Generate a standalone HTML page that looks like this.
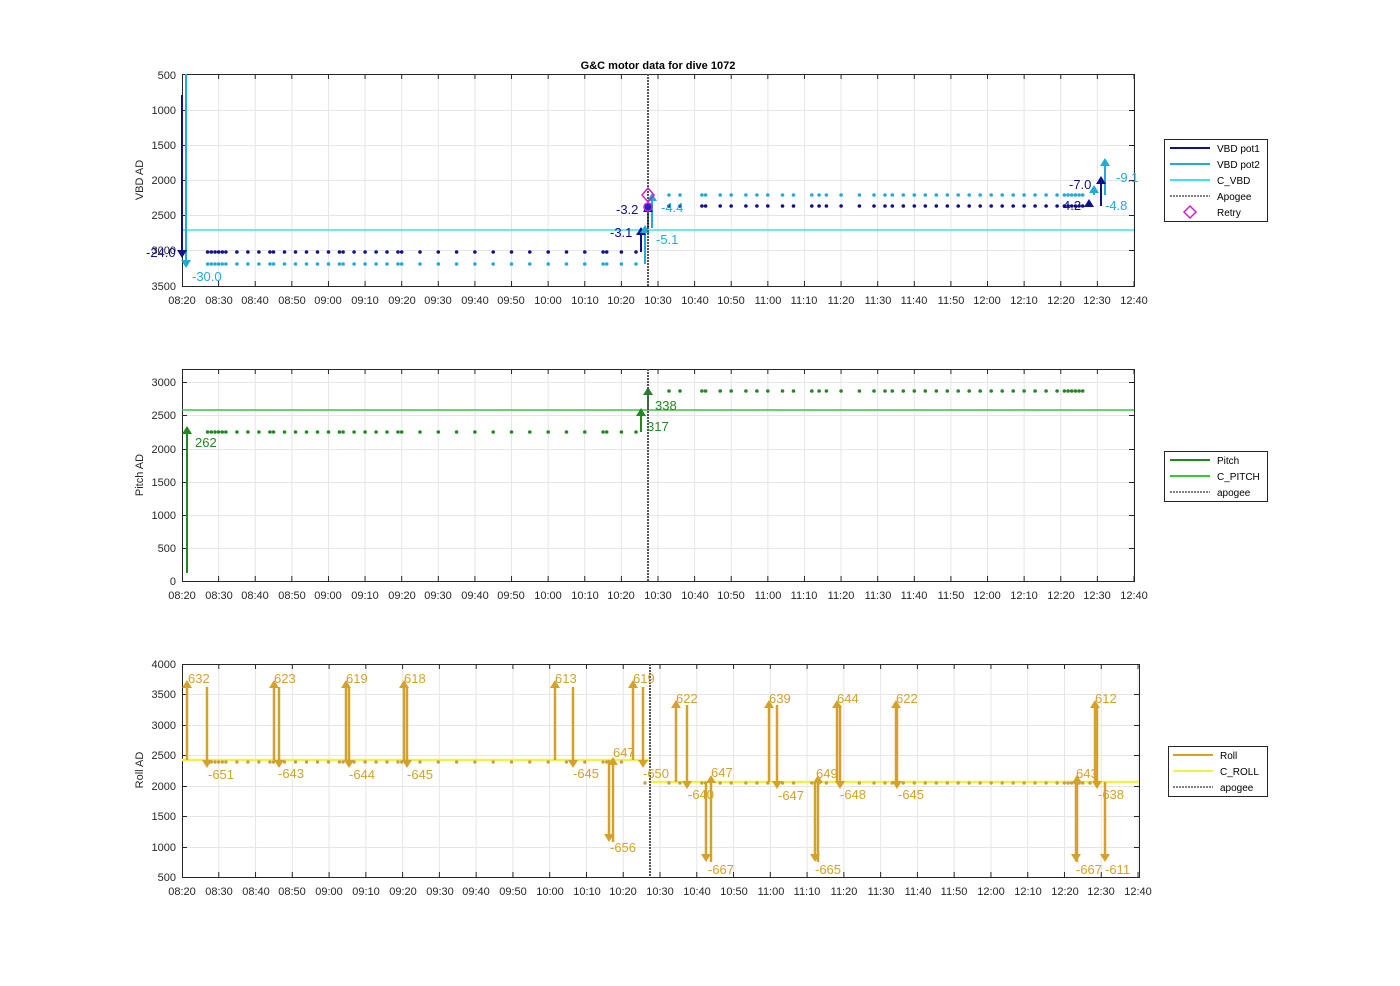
<!DOCTYPE html>
<html><head><meta charset="utf-8">
<style>
html,body{margin:0;padding:0;background:#fff;}
svg{display:block;font-family:"Liberation Sans",Arial,sans-serif;}
.tk{font-size:11px;fill:#262626;}
.lg{font-size:10px;fill:#000;}
</style></head>
<body>
<svg width="1400" height="986" viewBox="0 0 1400 986" xmlns="http://www.w3.org/2000/svg">
<defs>
<pattern id="vg" patternUnits="userSpaceOnUse" x="181.5" y="0" width="36.615" height="986"><line x1="0.5" y1="0" x2="0.5" y2="986" stroke="#e6e6e6" stroke-width="1"/></pattern>
<pattern id="vt" patternUnits="userSpaceOnUse" x="181.5" y="0" width="36.615" height="986"><line x1="0.5" y1="0" x2="0.5" y2="986" stroke="#262626" stroke-width="1"/></pattern>
<pattern id="vg3" patternUnits="userSpaceOnUse" x="181.5" y="0" width="36.77" height="986"><line x1="0.5" y1="0" x2="0.5" y2="986" stroke="#e6e6e6" stroke-width="1"/></pattern>
<pattern id="vt3" patternUnits="userSpaceOnUse" x="181.5" y="0" width="36.77" height="986"><line x1="0.5" y1="0" x2="0.5" y2="986" stroke="#262626" stroke-width="1"/></pattern>
</defs>
<rect width="1400" height="986" fill="#fff"/>

<!-- grids -->
<rect x="182" y="74" width="952" height="212" fill="url(#vg)"/>
<rect x="182" y="369" width="952" height="212" fill="url(#vg)"/>
<rect x="182" y="664" width="957" height="213" fill="url(#vg3)"/>
<path d="M182 110.5H1134M182 145.5H1134M182 180.5H1134M182 215.5H1134M182 250.5H1134
M182 382.5H1134M182 415.5H1134M182 449.5H1134M182 482.5H1134M182 515.5H1134M182 548.5H1134
M182 694.5H1139M182 725.5H1139M182 755.5H1139M182 786.5H1139M182 816.5H1139M182 847.5H1139" stroke="#e6e6e6" stroke-width="1" fill="none"/>
<!-- tick marks -->
<rect x="182" y="74" width="953" height="5" fill="url(#vt)"/>
<rect x="182" y="281" width="953" height="5" fill="url(#vt)"/>
<rect x="182" y="369" width="953" height="5" fill="url(#vt)"/>
<rect x="182" y="576" width="953" height="5" fill="url(#vt)"/>
<rect x="182" y="664" width="958" height="5" fill="url(#vt3)"/>
<rect x="182" y="872" width="958" height="5" fill="url(#vt3)"/>
<path d="M182 110.5h5M182 145.5h5M182 180.5h5M182 215.5h5M182 250.5h5M1134 110.5h-5M1134 145.5h-5M1134 180.5h-5M1134 215.5h-5M1134 250.5h-5
M182 382.5h5M182 415.5h5M182 449.5h5M182 482.5h5M182 515.5h5M182 548.5h5M1134 382.5h-5M1134 415.5h-5M1134 449.5h-5M1134 482.5h-5M1134 515.5h-5M1134 548.5h-5
M182 694.5h5M182 725.5h5M182 755.5h5M182 786.5h5M182 816.5h5M182 847.5h5M1139 694.5h-5M1139 725.5h-5M1139 755.5h-5M1139 786.5h-5M1139 816.5h-5M1139 847.5h-5" stroke="#262626" stroke-width="1"/>
<rect x="182.5" y="74.5" width="952" height="212" fill="none" stroke="#262626"/>
<rect x="182.5" y="369.5" width="952" height="212" fill="none" stroke="#262626"/>
<rect x="182.5" y="664.5" width="957" height="213" fill="none" stroke="#262626"/>

<!-- PLOT 1 data -->
<line x1="182" y1="230" x2="1134" y2="230" stroke="#40e0e8" stroke-width="1.5"/>
<g stroke-linecap="round" stroke-width="3.6" fill="none">
<path transform="translate(0,252)" stroke="#10108c" d="M207.6 0h0M211.3 0h0M215 0h0M218.6 0h0M222.3 0h0M225.9 0h0M236.9 0h0M247.9 0h0M258.9 0h0M269.9 0h0M273.5 0h0M284.5 0h0M295.5 0h0M306.5 0h0M317.5 0h0M328.5 0h0M339.4 0h0M343.1 0h0M354.1 0h0M365.1 0h0M376.1 0h0M387 0h0M398 0h0M401.7 0h0M420 0h0M438.3 0h0M456.6 0h0M474.9 0h0M493.2 0h0M511.5 0h0M529.8 0h0M548.2 0h0M566.5 0h0M584.8 0h0M603.1 0h0M606.7 0h0M621.4 0h0M636 0h0"/>
<path transform="translate(0,264)" stroke="#22aad8" d="M207.6 0h0M211.3 0h0M215 0h0M218.6 0h0M222.3 0h0M225.9 0h0M236.9 0h0M247.9 0h0M258.9 0h0M269.9 0h0M273.5 0h0M284.5 0h0M295.5 0h0M306.5 0h0M317.5 0h0M328.5 0h0M339.4 0h0M343.1 0h0M354.1 0h0M365.1 0h0M376.1 0h0M387 0h0M398 0h0M401.7 0h0M420 0h0M438.3 0h0M456.6 0h0M474.9 0h0M493.2 0h0M511.5 0h0M529.8 0h0M548.2 0h0M566.5 0h0M584.8 0h0M603.1 0h0M606.7 0h0M621.4 0h0M636 0h0"/>
<path transform="translate(0,206)" stroke="#10108c" d="M669 0h0M680 0h0M701.9 0h0M705.6 0h0M720.2 0h0M731.2 0h0M745.9 0h0M756.9 0h0M767.8 0h0M782.5 0h0M793.5 0h0M811.8 0h0M819.1 0h0M826.4 0h0M841.1 0h0M859.4 0h0M874 0h0M885 0h0M892.3 0h0M903.3 0h0M914.3 0h0M925.3 0h0M936.3 0h0M947.3 0h0M958.2 0h0M969.2 0h0M980.2 0h0M991.2 0h0M1002.2 0h0M1013.2 0h0M1024.1 0h0M1035.1 0h0M1046.1 0h0M1057.1 0h0M1064.4 0h0M1068.1 0h0M1071.7 0h0M1075.4 0h0M1079.1 0h0M1082.7 0h0"/>
<path transform="translate(0,195)" stroke="#22aad8" d="M669 0h0M680 0h0M701.9 0h0M705.6 0h0M720.2 0h0M731.2 0h0M745.9 0h0M756.9 0h0M767.8 0h0M782.5 0h0M793.5 0h0M811.8 0h0M819.1 0h0M826.4 0h0M841.1 0h0M859.4 0h0M874 0h0M885 0h0M892.3 0h0M903.3 0h0M914.3 0h0M925.3 0h0M936.3 0h0M947.3 0h0M958.2 0h0M969.2 0h0M980.2 0h0M991.2 0h0M1002.2 0h0M1013.2 0h0M1024.1 0h0M1035.1 0h0M1046.1 0h0M1057.1 0h0M1064.4 0h0M1068.1 0h0M1071.7 0h0M1075.4 0h0M1079.1 0h0M1082.7 0h0"/>
</g>
<path d="M182 95V252M641 252V233M648 228V210M1089 206V205M1101 206V182" stroke="#10108c" stroke-width="2"/>
<path d="M186 74V262M645 264V231M652 228V199M1094 195V191M1105 195V164" stroke="#22aad8" stroke-width="2"/>
<path d="M177 250L182 258L187 250ZM636 235L641 227L646 235ZM643 212L648 204L653 212ZM1084 207L1089 199L1094 207ZM1096 184L1101 176L1106 184Z" fill="#10108c"/>
<path d="M181 260L186 268L191 260ZM640 233L645 225L650 233ZM647 201L652 193L657 201ZM1089 193L1094 185L1099 193ZM1100 166L1105 158L1110 166Z" fill="#22aad8"/>
<line x1="648" y1="74" x2="648" y2="286" stroke="#555" stroke-width="2" stroke-dasharray="2,1"/>
<circle cx="648" cy="207" r="4" fill="#2222cc" stroke="#cc22cc" stroke-width="1.5"/>
<path d="M648 188L654 195L648 202L642 195Z" fill="none" stroke="#cc22cc" stroke-width="1.5"/>

<!-- PLOT 2 data -->
<line x1="182" y1="410" x2="1134" y2="410" stroke="#33cc33" stroke-width="1.5"/>
<g stroke-linecap="round" stroke-width="3.6" fill="none" stroke="#228822">
<path transform="translate(0,432)" d="M207.6 0h0M211.3 0h0M215 0h0M218.6 0h0M222.3 0h0M225.9 0h0M236.9 0h0M247.9 0h0M258.9 0h0M269.9 0h0M273.5 0h0M284.5 0h0M295.5 0h0M306.5 0h0M317.5 0h0M328.5 0h0M339.4 0h0M343.1 0h0M354.1 0h0M365.1 0h0M376.1 0h0M387 0h0M398 0h0M401.7 0h0M420 0h0M438.3 0h0M456.6 0h0M474.9 0h0M493.2 0h0M511.5 0h0M529.8 0h0M548.2 0h0M566.5 0h0M584.8 0h0M603.1 0h0M606.7 0h0M621.4 0h0M636 0h0"/>
<path transform="translate(0,391)" d="M669 0h0M680 0h0M701.9 0h0M705.6 0h0M720.2 0h0M731.2 0h0M745.9 0h0M756.9 0h0M767.8 0h0M782.5 0h0M793.5 0h0M811.8 0h0M819.1 0h0M826.4 0h0M841.1 0h0M859.4 0h0M874 0h0M885 0h0M892.3 0h0M903.3 0h0M914.3 0h0M925.3 0h0M936.3 0h0M947.3 0h0M958.2 0h0M969.2 0h0M980.2 0h0M991.2 0h0M1002.2 0h0M1013.2 0h0M1024.1 0h0M1035.1 0h0M1046.1 0h0M1057.1 0h0M1064.4 0h0M1068.1 0h0M1071.7 0h0M1075.4 0h0M1079.1 0h0M1082.7 0h0"/>
</g>
<path d="M187 573V432M641 432V414M648 410V393" stroke="#228822" stroke-width="2"/>
<path d="M182 434L187 426L192 434ZM636 416L641 408L646 416ZM643 395L648 387L653 395Z" fill="#228822"/>
<line x1="648" y1="369" x2="648" y2="581" stroke="#555" stroke-width="2" stroke-dasharray="2,1"/>

<!-- PLOT 3 data -->
<line x1="182" y1="760" x2="650" y2="760" stroke="#f4f04a" stroke-width="2.5"/>
<line x1="650" y1="782" x2="1139" y2="782" stroke="#f4f04a" stroke-width="2.5"/>
<g stroke-linecap="round" stroke-width="3.4" fill="none" stroke="#c9a040">
<path transform="translate(0,762)" d="M207.6 0h0M211.3 0h0M215 0h0M218.6 0h0M222.3 0h0M225.9 0h0M236.9 0h0M247.9 0h0M258.9 0h0M269.9 0h0M273.5 0h0M284.5 0h0M295.5 0h0M306.5 0h0M317.5 0h0M328.5 0h0M339.4 0h0M343.1 0h0M354.1 0h0M365.1 0h0M376.1 0h0M387 0h0M398 0h0M401.7 0h0M420 0h0M438.3 0h0M456.6 0h0M474.9 0h0M493.2 0h0M511.5 0h0M529.8 0h0M548.2 0h0M566.5 0h0M584.8 0h0M603.1 0h0M606.7 0h0M621.4 0h0"/>
<path transform="translate(0,783)" d="M645 0h0M669 0h0M680 0h0M701.9 0h0M705.6 0h0M720.2 0h0M731.2 0h0M745.9 0h0M756.9 0h0M767.8 0h0M782.5 0h0M793.5 0h0M811.8 0h0M819.1 0h0M826.4 0h0M841.1 0h0M859.4 0h0M874 0h0M885 0h0M892.3 0h0M903.3 0h0M914.3 0h0M925.3 0h0M936.3 0h0M947.3 0h0M958.2 0h0M969.2 0h0M980.2 0h0M991.2 0h0M1002.2 0h0M1013.2 0h0M1024.1 0h0M1035.1 0h0M1046.1 0h0M1057.1 0h0M1064.4 0h0M1068.1 0h0M1071.7 0h0M1075.4 0h0M1079.1 0h0M1082.7 0h0M1090 0h0"/>
</g>
<path stroke="#d4a22a" stroke-width="2.5" fill="none" d="M187 760V686M207 687V762M274 760V686M279 687V762M346 760V686M349 687V762M404 760V686M407 687V762M555 760V686M573 687V762M609 760V836M613 842V763M633 760V686M643 687V762M676 782V706M687 705V783M706 782V856M711 862V781M769 782V706M777 705V783M815 782V856M818 862V781M837 782V706M840 705V783M896 782V706M897 705V783M1076 782V856M1077 862V781M1095 782V706M1097 705V783M1105 782V856"/>
<path fill="#d4a22a" d="M182 688L187 680L192 688ZM202 760L207 768L212 760ZM269 688L274 680L279 688ZM274 760L279 768L284 760ZM341 688L346 680L351 688ZM344 760L349 768L354 760ZM399 688L404 680L409 688ZM402 760L407 768L412 760ZM550 688L555 680L560 688ZM568 760L573 768L578 760ZM604 834L609 842L614 834ZM608 765L613 757L618 765ZM628 688L633 680L638 688ZM638 760L643 768L648 760ZM671 708L676 700L681 708ZM682 781L687 789L692 781ZM701 854L706 862L711 854ZM706 783L711 775L716 783ZM764 708L769 700L774 708ZM772 781L777 789L782 781ZM810 854L815 862L820 854ZM813 783L818 775L823 783ZM832 708L837 700L842 708ZM835 781L840 789L845 781ZM891 708L896 700L901 708ZM892 781L897 789L902 781ZM1071 854L1076 862L1081 854ZM1072 783L1077 775L1082 783ZM1090 708L1095 700L1100 708ZM1092 781L1097 789L1102 781ZM1100 854L1105 862L1110 854Z"/>
<line x1="650" y1="664" x2="650" y2="877" stroke="#555" stroke-width="2" stroke-dasharray="2,1"/>

<!-- Title -->
<text x="658" y="69" text-anchor="middle" font-size="11" font-weight="bold" fill="#000">G&amp;C motor data for dive 1072</text>

<!-- Axis 1 labels -->
<g class="tk" text-anchor="end">
<text x="176" y="79">500</text><text x="176" y="114">1000</text><text x="176" y="149">1500</text>
<text x="176" y="184">2000</text><text x="176" y="219">2500</text><text x="176" y="254">3000</text><text x="176" y="290">3500</text>
</g>
<text class="tk" transform="translate(143,180) rotate(-90)" text-anchor="middle">VBD AD</text>
<g class="tk" text-anchor="middle">
<text x="182" y="304">08:20</text><text x="219" y="304">08:30</text><text x="255" y="304">08:40</text><text x="292" y="304">08:50</text><text x="328" y="304">09:00</text><text x="365" y="304">09:10</text><text x="402" y="304">09:20</text><text x="438" y="304">09:30</text><text x="475" y="304">09:40</text><text x="511" y="304">09:50</text><text x="548" y="304">10:00</text><text x="585" y="304">10:10</text><text x="621" y="304">10:20</text><text x="658" y="304">10:30</text><text x="695" y="304">10:40</text><text x="731" y="304">10:50</text><text x="768" y="304">11:00</text><text x="804" y="304">11:10</text><text x="841" y="304">11:20</text><text x="878" y="304">11:30</text><text x="914" y="304">11:40</text><text x="951" y="304">11:50</text><text x="987" y="304">12:00</text><text x="1024" y="304">12:10</text><text x="1061" y="304">12:20</text><text x="1097" y="304">12:30</text><text x="1134" y="304">12:40</text>
</g>

<!-- Axis 2 labels -->
<g class="tk" text-anchor="end">
<text x="176" y="386">3000</text><text x="176" y="419">2500</text><text x="176" y="453">2000</text>
<text x="176" y="486">1500</text><text x="176" y="519">1000</text><text x="176" y="552">500</text><text x="176" y="585">0</text>
</g>
<text class="tk" transform="translate(143,475) rotate(-90)" text-anchor="middle">Pitch AD</text>
<g class="tk" text-anchor="middle">
<text x="182" y="599">08:20</text><text x="219" y="599">08:30</text><text x="255" y="599">08:40</text><text x="292" y="599">08:50</text><text x="328" y="599">09:00</text><text x="365" y="599">09:10</text><text x="402" y="599">09:20</text><text x="438" y="599">09:30</text><text x="475" y="599">09:40</text><text x="511" y="599">09:50</text><text x="548" y="599">10:00</text><text x="585" y="599">10:10</text><text x="621" y="599">10:20</text><text x="658" y="599">10:30</text><text x="695" y="599">10:40</text><text x="731" y="599">10:50</text><text x="768" y="599">11:00</text><text x="804" y="599">11:10</text><text x="841" y="599">11:20</text><text x="878" y="599">11:30</text><text x="914" y="599">11:40</text><text x="951" y="599">11:50</text><text x="987" y="599">12:00</text><text x="1024" y="599">12:10</text><text x="1061" y="599">12:20</text><text x="1097" y="599">12:30</text><text x="1134" y="599">12:40</text>
</g>

<!-- Axis 3 labels -->
<g class="tk" text-anchor="end">
<text x="176" y="668">4000</text><text x="176" y="698">3500</text><text x="176" y="729">3000</text>
<text x="176" y="759">2500</text><text x="176" y="790">2000</text><text x="176" y="820">1500</text><text x="176" y="851">1000</text><text x="176" y="881">500</text>
</g>
<text class="tk" transform="translate(143,770) rotate(-90)" text-anchor="middle">Roll AD</text>
<g class="tk" text-anchor="middle">
<text x="182" y="895">08:20</text><text x="219" y="895">08:30</text><text x="256" y="895">08:40</text><text x="292" y="895">08:50</text><text x="329" y="895">09:00</text><text x="366" y="895">09:10</text><text x="403" y="895">09:20</text><text x="440" y="895">09:30</text><text x="476" y="895">09:40</text><text x="513" y="895">09:50</text><text x="550" y="895">10:00</text><text x="587" y="895">10:10</text><text x="623" y="895">10:20</text><text x="660" y="895">10:30</text><text x="697" y="895">10:40</text><text x="734" y="895">10:50</text><text x="771" y="895">11:00</text><text x="807" y="895">11:10</text><text x="844" y="895">11:20</text><text x="881" y="895">11:30</text><text x="918" y="895">11:40</text><text x="954" y="895">11:50</text><text x="991" y="895">12:00</text><text x="1028" y="895">12:10</text><text x="1065" y="895">12:20</text><text x="1101" y="895">12:30</text><text x="1138" y="895">12:40</text>
</g>

<!-- annotations -->
<g font-size="13">
<text x="146" y="257" fill="#10108c">-24.0</text>
<text x="192" y="281" fill="#22aad8">-30.0</text>
<text x="610" y="237" fill="#10108c">-3.1</text>
<text x="656" y="244" fill="#22aad8">-5.1</text>
<text x="616" y="214" fill="#10108c">-3.2</text>
<text x="661" y="212" fill="#22aad8">-4.4</text>
<text x="1069" y="189" fill="#10108c">-7.0</text>
<text x="1063" y="210" fill="#10108c">4.2</text>
<text x="1105" y="210" fill="#22aad8">-4.8</text>
<text x="1116" y="182" fill="#22aad8">-9.1</text>
</g>
<g font-size="13" fill="#228822">
<text x="195" y="447">262</text>
<text x="647" y="431">317</text>
<text x="655" y="410">338</text>
</g>
<g font-size="13" fill="#d4a22a">
<text x="188" y="683">632</text><text x="208" y="779">-651</text>
<text x="274" y="683">623</text><text x="278" y="778">-643</text>
<text x="346" y="683">619</text><text x="349" y="779">-644</text>
<text x="404" y="683">618</text><text x="407" y="779">-645</text>
<text x="555" y="683">613</text><text x="573" y="778">-645</text>
<text x="613" y="757">647</text><text x="610" y="852">-656</text>
<text x="633" y="683">619</text><text x="643" y="778">-650</text>
<text x="676" y="703">622</text><text x="688" y="799">-640</text>
<text x="711" y="777">647</text><text x="708" y="874">-667</text>
<text x="769" y="703">639</text><text x="778" y="800">-647</text>
<text x="816" y="778">649</text><text x="815" y="874">-665</text>
<text x="837" y="703">644</text><text x="840" y="799">-648</text>
<text x="896" y="703">622</text><text x="898" y="799">-645</text>
<text x="1076" y="778">643</text><text x="1076" y="874">-667</text>
<text x="1095" y="703">612</text><text x="1098" y="799">-638</text>
<text x="1105" y="874">-611</text>
</g>

<!-- Legend 1 -->
<rect x="1164.5" y="139.5" width="103" height="82" fill="#fff" stroke="#262626" stroke-width="1"/>
<line x1="1170" y1="148" x2="1210" y2="148" stroke="#10108c" stroke-width="2"/>
<line x1="1170" y1="164" x2="1210" y2="164" stroke="#22aad8" stroke-width="2"/>
<line x1="1170" y1="180" x2="1210" y2="180" stroke="#40e0e8" stroke-width="2"/>
<line x1="1170" y1="196" x2="1210" y2="196" stroke="#555" stroke-width="1.5" stroke-dasharray="2,1"/>
<path d="M1190 206 L1196 212 L1190 218 L1184 212 Z" fill="none" stroke="#cc22cc" stroke-width="1.5"/>
<g class="lg"><text x="1217" y="152">VBD pot1</text><text x="1217" y="168">VBD pot2</text><text x="1217" y="184">C_VBD</text><text x="1217" y="200">Apogee</text><text x="1217" y="216">Retry</text></g>

<!-- Legend 2 -->
<rect x="1164.5" y="451.5" width="103" height="50" fill="#fff" stroke="#262626" stroke-width="1"/>
<line x1="1170" y1="460" x2="1210" y2="460" stroke="#228822" stroke-width="2"/>
<line x1="1170" y1="476" x2="1210" y2="476" stroke="#33cc33" stroke-width="2"/>
<line x1="1170" y1="492" x2="1210" y2="492" stroke="#555" stroke-width="1.5" stroke-dasharray="2,1"/>
<g class="lg"><text x="1217" y="464">Pitch</text><text x="1217" y="480">C_PITCH</text><text x="1217" y="496">apogee</text></g>

<!-- Legend 3 -->
<rect x="1168.5" y="746.5" width="99" height="50" fill="#fff" stroke="#262626" stroke-width="1"/>
<line x1="1173" y1="755" x2="1213" y2="755" stroke="#d4a22a" stroke-width="2"/>
<line x1="1173" y1="771" x2="1213" y2="771" stroke="#f4f04a" stroke-width="2"/>
<line x1="1173" y1="787" x2="1213" y2="787" stroke="#555" stroke-width="1.5" stroke-dasharray="2,1"/>
<g class="lg"><text x="1220" y="759">Roll</text><text x="1220" y="775">C_ROLL</text><text x="1220" y="791">apogee</text></g>
</svg>
</body></html>
